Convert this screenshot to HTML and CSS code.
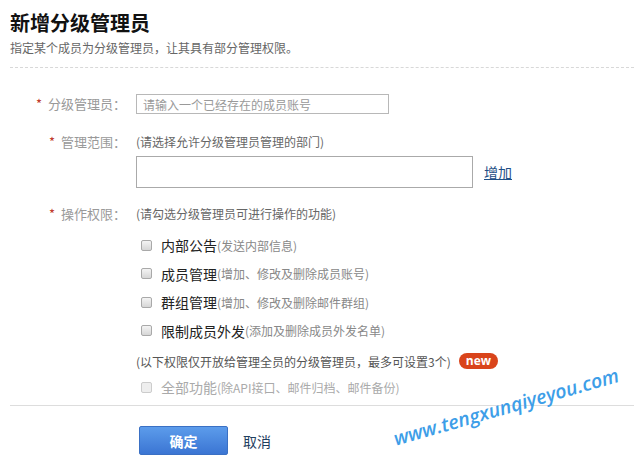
FILE: index.html
```html
<!DOCTYPE html>
<html lang="zh-CN">
<head>
<meta charset="utf-8">
<title>新增分级管理员</title>
<link rel="stylesheet" href="styles.css">
</head>
<body>
<div class="page">
  <h1 class="title">新增分级管理员</h1>
  <p class="subtitle">指定某个成员为分级管理员，让其具有部分管理权限。</p>
  <div class="divider-dashed"></div>

  <div class="form">
    <div class="row row-admin">
      <div class="label"><span class="star">*</span>分级管理员：</div>
      <div class="control">
        <input class="input" type="text" placeholder="请输入一个已经存在的成员账号">
      </div>
    </div>

    <div class="row row-scope">
      <div class="label"><span class="star">*</span>管理范围：</div>
      <div class="control">
        <div class="hint">(请选择允许分级管理员管理的部门)</div>
        <div class="scope-line">
          <div class="scope-box"></div>
          <a class="link" href="#">增加</a>
        </div>
      </div>
    </div>

    <div class="row row-perm">
      <div class="label"><span class="star">*</span>操作权限：</div>
      <div class="control">
        <div class="hint">(请勾选分级管理员可进行操作的功能)</div>
        <ul class="perms">
          <li class="perm"><span class="cb"></span><span class="perm-name">内部公告</span><span class="perm-desc">(发送内部信息)</span></li>
          <li class="perm"><span class="cb"></span><span class="perm-name">成员管理</span><span class="perm-desc">(增加、修改及删除成员账号)</span></li>
          <li class="perm"><span class="cb"></span><span class="perm-name">群组管理</span><span class="perm-desc">(增加、修改及删除邮件群组)</span></li>
          <li class="perm"><span class="cb"></span><span class="perm-name">限制成员外发</span><span class="perm-desc">(添加及删除成员外发名单)</span></li>
        </ul>
        <div class="note">(以下权限仅开放给管理全员的分级管理员，最多可设置3个)<span class="badge">new</span></div>
        <div class="perm perm-disabled"><span class="cb"></span><span class="perm-name">全部功能</span><span class="perm-desc">(除API接口、邮件归档、邮件备份)</span></div>
      </div>
    </div>
  </div>

  <div class="divider-solid"></div>

  <div class="actions">
    <button class="btn-primary" type="button">确定</button>
    <a class="btn-cancel" href="#">取消</a>
  </div>

  <div class="watermark">www.tengxunqiyeyou.com</div>
</div>
</body>
</html>
```

FILE: styles.css
```css
* { box-sizing: border-box; }

html, body {
  margin: 0;
  padding: 0;
  background: #fff;
}

body {
  font-family: "Noto Sans CJK SC", "Liberation Sans", sans-serif;
  color: #333;
  font-size: 12px;
}

.page {
  position: relative;
  width: 634px;
  height: 471px;
  padding: 10px 0 0 10px;
  overflow: hidden;
}

.title {
  margin: 0;
  font-size: 20px;
  line-height: 26px;
  font-weight: bold;
  color: #111;
}

.subtitle {
  margin: 2px 0 0;
  font-size: 12px;
  line-height: 20px;
  color: #666;
}

.divider-dashed {
  margin-top: 9px;
  border-top: 1px dashed #d8d8d8;
}

.form {
  padding-top: 26px;
}

.row {
  display: grid;
  grid-template-columns: 116px 1fr;
  column-gap: 10px;
  align-items: start;
}

.label {
  text-align: right;
  font-size: 13px;
  line-height: 18px;
  color: #999;
  white-space: nowrap;
}

.star {
  color: #c0392b;
  margin-right: 6px;
}

.row-admin .label { line-height: 20px; }

.input {
  display: block;
  width: 253px;
  height: 20px;
  margin: 0;
  padding: 0 6px;
  border: 1px solid #b8b8b8;
  font-family: inherit;
  font-size: 12px;
  color: #333;
  outline: none;
}

.input::placeholder { color: #999; }

.row-scope { margin-top: 19px; }

.hint {
  font-size: 12px;
  line-height: 18px;
  color: #666;
}

.scope-line {
  display: flex;
  align-items: center;
  margin-top: 5px;
}

.scope-box {
  width: 337px;
  height: 32px;
  border: 1px solid #aaa;
}

.link {
  margin-left: 11px;
  font-size: 14px;
  color: #1f4f86;
  text-decoration: underline;
}

.row-perm { margin-top: 17px; }

.perms {
  list-style: none;
  margin: 8px 0 0;
  padding: 0;
}

.perm {
  display: flex;
  align-items: center;
  height: 28.5px;
  padding-left: 5px;
}

.cb {
  flex: none;
  width: 11px;
  height: 11px;
  border: 1px solid #a9a9a9;
  border-radius: 2px;
  background: linear-gradient(#f4f4f4, #d6d6d6);
  margin-right: 9px;
}

.perm-name {
  font-size: 14px;
  color: #222;
}

.perm-desc {
  font-size: 12px;
  color: #888;
}

.note {
  display: flex;
  align-items: center;
  height: 20px;
  margin-top: 6px;
  font-size: 12px;
  color: #555;
}

.badge {
  display: inline-block;
  margin-left: 8px;
  height: 16px;
  padding: 0 7px;
  border-radius: 8px;
  background: #d9441b;
  color: #fff;
  font-family: "Open Sans", "Liberation Sans", sans-serif;
  font-weight: bold;
  font-size: 12px;
  line-height: 16px;
}

.perm-disabled {
  height: 20px;
  margin-top: 6px;
}

.perm-disabled .cb {
  background: #eee;
  border-color: #ccc;
}

.perm-disabled .perm-name {
  color: #aaa;
}

.perm-disabled .perm-desc {
  color: #aaa;
}

.divider-solid {
  margin-top: 8px;
  border-top: 1px solid #ddd;
}

.actions {
  display: flex;
  align-items: center;
  padding: 20px 0 0 129px;
}

.btn-primary {
  width: 89px;
  height: 29px;
  border: 1px solid #3a70c4;
  border-radius: 2px;
  background: linear-gradient(#5c9ceb, #3b75d3);
  color: #fff;
  font-family: inherit;
  font-size: 14px;
  font-weight: bold;
  cursor: pointer;
}

.btn-cancel {
  margin-left: 15px;
  font-size: 14px;
  color: #1f4060;
  text-decoration: none;
}

.watermark {
  position: absolute;
  left: 394px;
  top: 428px;
  transform: rotate(-16deg);
  transform-origin: left center;
  font-family: "Open Sans", "DejaVu Sans", sans-serif;
  font-style: italic;
  font-weight: 600;
  font-size: 19.5px;
  line-height: 22px;
  color: #3d9ee8;
  white-space: nowrap;
}
```
